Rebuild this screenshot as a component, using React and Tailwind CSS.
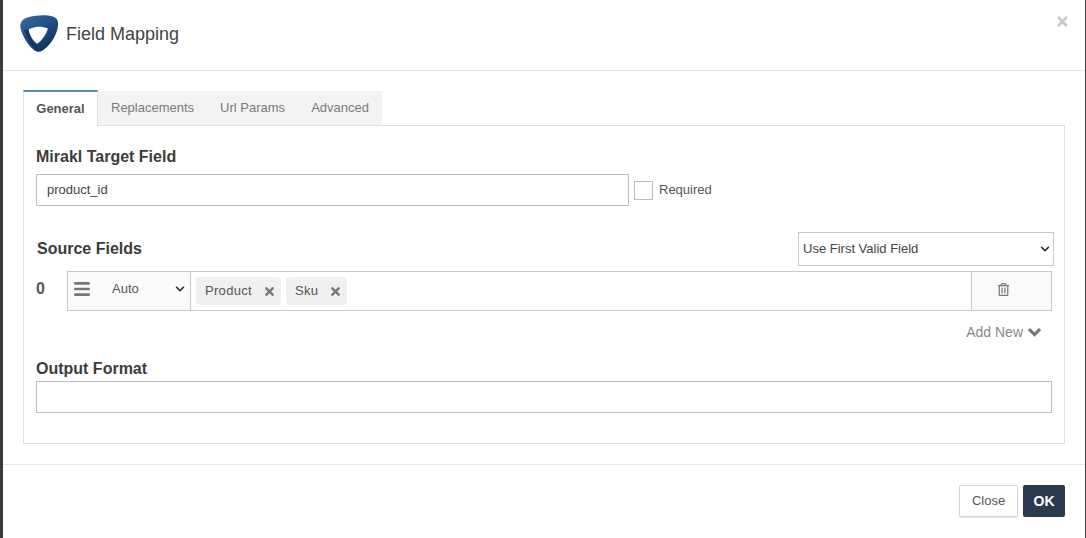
import React from "react";
import { FaTimes, FaRegTrashAlt, FaChevronDown, FaBars } from "react-icons/fa";

function Logo() {
  return (
    <svg width="40" height="40" viewBox="0 0 40 40" className="shrink-0">
      <defs>
        <linearGradient id="g" x1="0" y1="0" x2="0.7" y2="1">
          <stop offset="0" stopColor="#3a6c9c" />
          <stop offset="0.5" stopColor="#1f5088" />
          <stop offset="1" stopColor="#0f2f57" />
        </linearGradient>
      </defs>
      <path
        fillRule="evenodd"
        fill="url(#g)"
        d="M7 4C15 1 27 0.5 34 2.5C38.5 4 39.5 8 39 12C38 21 31 32 23.5 36.5C20.5 38.5 17.5 38 15 36C9 31 3.5 23 1.5 14C0.8 9 3 5.5 7 4ZM9.5 15.5C10.5 21 13.5 26.5 18 30C23.5 26 27 20.5 29 14.5C25 13 21 12.5 17 13C14 13.5 11.5 14.5 9.5 15.5Z"
      />
      <path fill="#0f2f57" opacity="0.6" d="M9.5 15.5C10.5 21 13.5 26.5 18 30L19 36.5C11 31 6 22 5 15Z" />
    </svg>
  );
}

function HeavyChevron({ className }) {
  return (
    <svg viewBox="0 0 14 10" className={className} fill="none" stroke="currentColor" strokeWidth="3.2">
      <path d="M1.5 2.2L7 7.6L12.5 2.2" />
    </svg>
  );
}

export default function App() {
  return (
    <div className="w-[1086px] h-[538px] overflow-hidden bg-[#3a3a3a] pl-[3px] pr-[1px] font-['Liberation_Sans',Arial,sans-serif]">
      <div className="h-full bg-white flex flex-col">
        <header className="relative h-[71px] shrink-0 border-b border-[#e5e5e5] flex items-center pl-[16px] gap-[7px] pb-[3px]">
          <Logo />
          <h1 className="text-[18px] text-[#444] leading-none">Field Mapping</h1>
          <FaTimes className="absolute right-[15px] top-[14px] text-[#c8c8c8] text-[15px]" />
        </header>

        <main className="flex-1 px-[20px] pt-[19px]">
          <div className="flex h-[36px] text-[13px]">
            <div className="w-[75px] h-[36px] bg-white border-t-2 border-t-[#5a8aa5] border-x border-x-[#e0e0e0] flex items-center justify-center font-bold text-[#555] relative z-10">General</div>
            <div className="w-[284px] h-[35px] mt-[1px] bg-[#f3f3f3] border-b border-[#e0e0e0] flex items-center text-[#7a7a7a]">
              <span className="ml-[13px]">Replacements</span>
              <span className="ml-[26px]">Url Params</span>
              <span className="ml-[26px]">Advanced</span>
            </div>
          </div>

          <section className="h-[319px] -mt-px border border-[#e0e0e0] px-[12px] pt-[21px] text-[#444]">
            <h2 className="text-[16px] font-bold leading-[20px] text-[#3c3c3c]">Mirakl Target Field</h2>
            <div className="flex items-center mt-[7px]">
              <div className="w-[593px] h-[32px] border border-[#bdbdbd] flex items-center pl-[10px] text-[13px] text-[#444]">product_id</div>
              <span className="ml-[5px] w-[19px] h-[19px] border border-[#bdbdbd] block" />
              <span className="ml-[6px] text-[13px] text-[#555]">Required</span>
            </div>

            <div className="flex items-center justify-between mt-[26px] h-[34px]">
              <h2 className="ml-px text-[16px] font-bold text-[#3c3c3c]">Source Fields</h2>
              <div className="w-[256px] h-[34px] -mr-[2px] border border-[#c8c8c8] flex items-center justify-between pl-[4px] pr-[3px] text-[13px] text-[#444]">
                <span>Use First Valid Field</span>
                <FaChevronDown className="text-[10px] text-[#333]" />
              </div>
            </div>

            <div className="flex items-center mt-[5px]">
              <span className="w-[31px] text-[16px] font-bold text-[#555] pb-[5px]">0</span>
              <div className="w-[985px] h-[40px] border border-[#c8c8c8] flex">
                <div className="w-[123px] shrink-0 bg-[#fafafa] border-r border-[#c8c8c8] flex items-center pl-[5px] pr-[3px] pb-[4px] text-[13px] text-[#555]">
                  <FaBars className="text-[18px] text-[#777]" />
                  <span className="ml-[21px]">Auto</span>
                  <FaChevronDown className="ml-auto text-[10px] text-[#333] mr-[2px]" />
                </div>
                <div className="flex-1 flex items-center gap-[5px] pl-[5px] text-[13px] text-[#555]">
                  <span className="h-[28px] w-[85px] rounded-[4px] bg-[#f0f0f0] flex items-center justify-between pl-[9px] pr-[5px] tracking-[0.3px]">Product<FaTimes className="text-[13px] text-[#777]" /></span>
                  <span className="h-[28px] w-[61px] rounded-[4px] bg-[#f0f0f0] flex items-center justify-between pl-[9px] pr-[5px] tracking-[0.3px]">Sku<FaTimes className="text-[13px] text-[#777]" /></span>
                </div>
                <div className="w-[80px] shrink-0 bg-[#fafafa] border-l border-[#c8c8c8] flex items-center justify-start pl-[25px] pb-[3px]">
                  <FaRegTrashAlt className="text-[13px] text-[#777]" />
                </div>
              </div>
            </div>

            <div className="flex justify-end items-center gap-[4px] mt-[13px] mr-[10px] h-[16px] text-[14px] text-[#888]">
              <span>Add New</span>
              <HeavyChevron className="w-[15px] h-[10px] text-[#777]" />
            </div>

            <h2 className="text-[16px] font-bold leading-[20px] text-[#3c3c3c] mt-[19px]">Output Format</h2>
            <div className="w-full h-[32px] border border-[#bdbdbd] mt-[2px]" />
          </section>
        </main>

        <footer className="h-[74px] shrink-0 border-t border-[#e5e5e5] flex items-start justify-end gap-[5px] pt-[20px] pr-[20px]">
          <button className="w-[59px] h-[32px] rounded-[2px] border border-[#d5d5d5] bg-white text-[13px] text-[#555] shadow-[0_1px_1px_rgba(0,0,0,0.12)]">Close</button>
          <button className="w-[42px] h-[32px] rounded-[2px] bg-[#2a3b4f] text-[14px] font-bold text-white">OK</button>
        </footer>
      </div>
    </div>
  );
}
